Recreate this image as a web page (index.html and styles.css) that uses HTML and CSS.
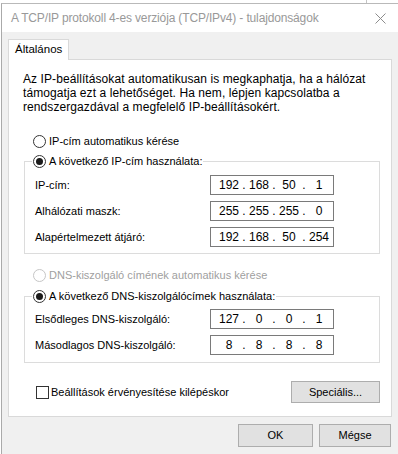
FILE: index.html
```html
<!DOCTYPE html>
<html lang="hu">
<head>
<meta charset="utf-8">
<title>TCP/IPv4 tulajdonságok</title>
<link rel="stylesheet" href="styles.css">
</head>
<body>
<div class="desk"><span class="desk-edge"></span></div>
<div class="window">
  <div class="titlebar">
    <span class="title">A TCP/IP protokoll 4-es verziója (TCP/IPv4) - tulajdonságok</span>
    <svg class="close" width="11" height="11" viewBox="0 0 11 11"><path d="M0.5 0.5L10.5 10.5M10.5 0.5L0.5 10.5" stroke="#8c8c8c" stroke-width="1" fill="none"/></svg>
  </div>
  <div class="client">
    <div class="tabs"><div class="tab">Általános</div></div>
    <div class="panel">
      <p class="desc">Az IP-beállításokat automatikusan is megkaphatja, ha a hálózat<br>támogatja ezt a lehetőséget. Ha nem, lépjen kapcsolatba a<br>rendszergazdával a megfelelő IP-beállításokért.</p>

      <div class="opt opt-ipauto"><span class="radio"></span><span>IP-cím automatikus kérése</span></div>

      <fieldset class="group group-ip">
        <legend><span class="opt"><span class="radio checked"></span><span>A következő IP-cím használata:</span></span></legend>
        <div class="fields">
          <span class="lbl">IP-cím:</span>
          <div class="ipbox"><span>192</span><i>.</i><span>168</span><i>.</i><span>50</span><i>.</i><span>1</span></div>
          <span class="lbl">Alhálózati maszk:</span>
          <div class="ipbox"><span>255</span><i>.</i><span>255</span><i>.</i><span>255</span><i>.</i><span>0</span></div>
          <span class="lbl">Alapértelmezett átjáró:</span>
          <div class="ipbox"><span>192</span><i>.</i><span>168</span><i>.</i><span>50</span><i>.</i><span>254</span></div>
        </div>
      </fieldset>

      <div class="opt opt-dnsauto disabled"><span class="radio"></span><span>DNS-kiszolgáló címének automatikus kérése</span></div>

      <fieldset class="group group-dns">
        <legend><span class="opt"><span class="radio checked"></span><span>A következő DNS-kiszolgálócímek használata:</span></span></legend>
        <div class="fields">
          <span class="lbl">Elsődleges DNS-kiszolgáló:</span>
          <div class="ipbox"><span>127</span><i>.</i><span>0</span><i>.</i><span>0</span><i>.</i><span>1</span></div>
          <span class="lbl">Másodlagos DNS-kiszolgáló:</span>
          <div class="ipbox"><span>8</span><i>.</i><span>8</span><i>.</i><span>8</span><i>.</i><span>8</span></div>
        </div>
      </fieldset>

      <div class="bottomrow">
        <div class="opt chk"><span class="checkbox"></span><span>Beállítások érvényesítése kilépéskor</span></div>
        <button class="btn btn-adv">Speciális...</button>
      </div>
    </div>
    <div class="buttons">
      <button class="btn btn-ok">OK</button>
      <button class="btn btn-cancel">Mégse</button>
    </div>
  </div>
</div>
</body>
</html>
```

FILE: styles.css
```css
* { box-sizing: border-box; }

html, body {
  margin: 0;
  padding: 0;
}

body {
  width: 398px;
  height: 454px;
  overflow: hidden;
  background: #ffffff;
  font-family: "Segoe UI", "Liberation Sans", Arial, sans-serif;
  font-size: 11px;
  line-height: 15px;
  color: #000;
}

.desk {
  height: 3px;
  display: flex;
}
.desk-edge {
  margin-left: 366px;
  width: 1px;
  background: #c4c4c4;
}

.window {
  margin-left: 1px;
  height: 451px;
  border-left: 1px solid #aaaaaa;
  border-top: 1px solid #b9b9b9;
  display: flex;
  flex-direction: column;
}

.titlebar {
  height: 28px;
  flex: none;
  background: #fff;
  display: flex;
  align-items: center;
  padding-left: 9px;
}
.title {
  color: #999999;
  font-size: 12px;
  letter-spacing: -0.15px;
  white-space: nowrap;
}
.close {
  margin-left: auto;
  margin-right: 12px;
  display: block;
}

.client {
  flex: 1;
  background: #f0f0f0;
  padding: 7px 6px 0 6px;
  display: flex;
  flex-direction: column;
}

.tabs {
  display: flex;
  height: 20px;
}
.tab {
  height: 21px;
  padding: 2px 6px 0 6px;
  background: #fff;
  border: 1px solid #d9d9d9;
  border-bottom: none;
  position: relative;
  z-index: 1;
  width: 61px;
  font-size: 11.5px;
}

.panel {
  height: 358px;
  flex: none;
  background: #fff;
  border: 1px solid #d9d9d9;
  padding: 12px 0 0 14px;
}

.desc {
  margin: 0;
  font-size: 12px;
  line-height: 14px;
  letter-spacing: 0.08px;
  white-space: nowrap;
}

.opt {
  display: flex;
  align-items: center;
  height: 16px;
  white-space: nowrap;
}
.opt-ipauto {
  margin: 19px 0 0 10px;
}
.opt-dnsauto {
  margin: 13px 0 0 10px;
}
.disabled { color: #a0a0a0; }

.radio {
  width: 13px;
  height: 13px;
  border: 1px solid #333;
  border-radius: 50%;
  background: #fff;
  margin-right: 3px;
  flex: none;
  display: flex;
  align-items: center;
  justify-content: center;
}
.radio.checked::after {
  content: "";
  width: 7px;
  height: 7px;
  border-radius: 50%;
  background: #1a1a1a;
}
.disabled .radio { border-color: #c6c6c6; }

.group {
  margin: 0 0 0 1px;
  padding: 0;
  width: 356px;
  border: 1px solid #dcdcdc;
  min-width: 0;
}
.group legend {
  margin-left: 7px;
  padding: 0 1px;
  height: 16px;
}
.group-ip { margin-top: 4px; }
.group-dns { margin-top: 5px; }

.fields {
  display: grid;
  grid-template-columns: 175px 124px;
  grid-auto-rows: 20px;
  row-gap: 6px;
  align-items: center;
  padding: 6px 0 6px 10px;
}
.group-dns .fields { padding: 5px 0 7px 10px; }

.lbl { white-space: nowrap; }

.ipbox {
  height: 20px;
  border: 1px solid #7a7a7a;
  background: #fff;
  display: grid;
  grid-template-columns: 22px 8px 22px 8px 22px 8px 22px;
  align-items: center;
  padding-left: 7px;
  font-size: 12px;
}
.ipbox span { text-align: center; }
.ipbox i { font-style: normal; text-align: center; }

.bottomrow {
  margin: 18px 0 0 1px;
  width: 356px;
  display: flex;
  align-items: center;
}
.chk { margin-left: 12px; }
.checkbox {
  width: 13px;
  height: 13px;
  border: 1px solid #333;
  background: #fff;
  margin-right: 2px;
  flex: none;
}

.btn {
  font: inherit;
  color: #000;
  background: #e1e1e1;
  border: 1px solid #adadad;
  height: 22px;
  padding: 0;
  margin: 0;
}
.btn-adv {
  margin-left: auto;
  width: 89px;
}

.buttons {
  display: flex;
  justify-content: flex-end;
  gap: 6px;
  margin-top: 7px;
}
.buttons .btn { height: 23px; }
.btn-ok { width: 75px; }
.btn-cancel { width: 72px; margin-right: 1px; }
```
